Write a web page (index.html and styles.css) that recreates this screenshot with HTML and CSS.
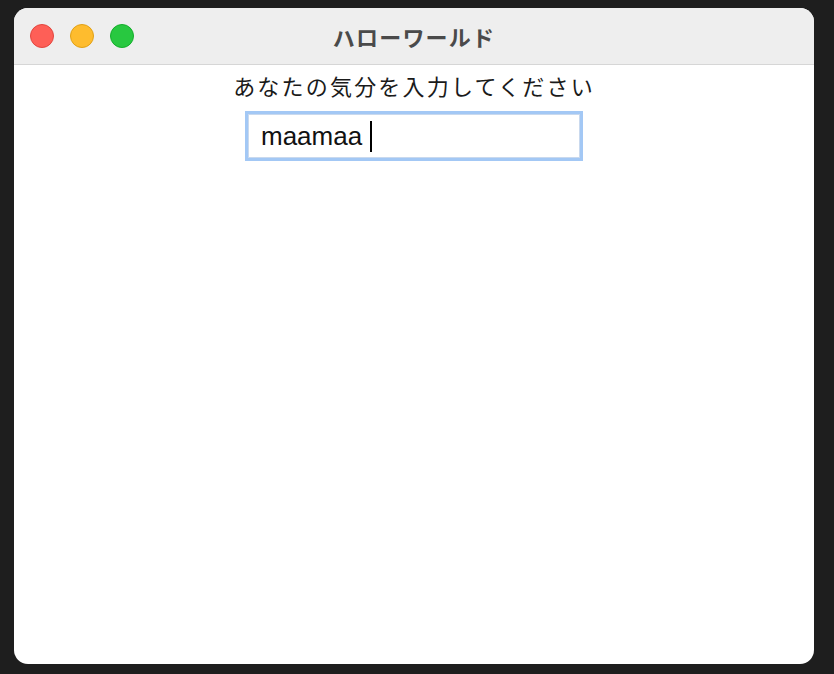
FILE: index.html
```html
<!DOCTYPE html>
<html lang="ja">
<head>
    <meta charset="UTF-8">
    <title>ハローワールド</title>
    <link rel="stylesheet" href="styles.css">
</head>
<body>
    <div class="window">
        <div class="titlebar">
            <div class="lights">
                <span class="light red"></span>
                <span class="light yellow"></span>
                <span class="light green"></span>
            </div>
            <div class="title">ハローワールド</div>
        </div>
        <div class="content">
            <div class="prompt">あなたの気分を入力してください</div>
            <div class="field">
                <span class="value">maamaa</span><span class="caret"></span>
            </div>
        </div>
    </div>
</body>
</html>
```

FILE: styles.css
```css
/* Desktop */
html, body {
    margin: 0;
    padding: 0;
    height: 100%;
}

body {
    background: #1e1e1e;
    font-family: "Noto Sans CJK JP", "Noto Sans", sans-serif;
    padding: 8px 20px 10px 14px;
    box-sizing: border-box;
}

.window {
    width: 800px;
    height: 656px;
    background: #fff;
    border-radius: 14px;
    overflow: hidden;
    display: flex;
    flex-direction: column;
}

/* Title bar */
.titlebar {
    height: 56px;
    background: #eeeeee;
    border-bottom: 1px solid #d6d6d6;
    display: flex;
    align-items: center;
    position: relative;
    flex-shrink: 0;
}

.lights {
    display: flex;
    gap: 16px;
    padding-left: 16px;
}

.light {
    width: 24px;
    height: 24px;
    border-radius: 50%;
    box-sizing: border-box;
}

.red {
    background: #fe5f57;
    border: 1px solid #e2463f;
}

.yellow {
    background: #febc2e;
    border: 1px solid #e1a116;
}

.green {
    background: #28c840;
    border: 1px solid #14ae2b;
}

.title {
    position: absolute;
    left: 0;
    right: 0;
    top: 0;
    bottom: 0;
    display: flex;
    align-items: center;
    justify-content: center;
    font-size: 22px;
    font-weight: bold;
    color: #4a4a4a;
    letter-spacing: 1.2px;
    pointer-events: none;
}

/* Content */
.content {
    display: flex;
    flex-direction: column;
    align-items: center;
    padding-top: 6px;
}

.prompt {
    font-size: 22px;
    color: #1a1a1a;
    line-height: 28px;
    letter-spacing: 2.2px;
}

.field {
    margin-top: 12px;
    width: 332px;
    height: 44px;
    border: 3px solid #a3c8f5;
    display: flex;
    align-items: center;
    box-shadow: inset 0 0 0 1px #c9d9ee;
}

.value {
    font-family: "Liberation Sans", Arial, sans-serif;
    font-size: 26px;
    color: #111;
    margin-left: 13px;
}

.caret {
    width: 2px;
    height: 31px;
    background: #000;
    margin-left: 8px;
}
```
